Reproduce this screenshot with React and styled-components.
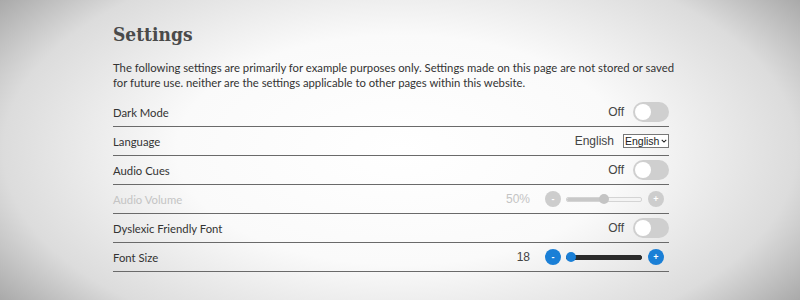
import React, { useState } from 'react'
import styled, { createGlobalStyle } from 'styled-components'

const GlobalStyle = createGlobalStyle`
  html, body {
    margin: 0;
    padding: 0;
  }
  body {
    width: 800px;
    height: 300px;
    overflow: hidden;
    background: radial-gradient(ellipse 62% 85% at 50% 50%, #ffffff 0%, #fafafa 45%, #dcdcdc 80%, #a9a9a9 100%);
  }
`

function Toggle({ on }) {
  return (
    <Switch $on={on}>
      <Knob $on={on} />
    </Switch>
  )
}

function Stepper({ value, disabled }) {
  const pos = `calc(4px + ${value / 100} * (100% - 8px))`
  return (
    <StepGroup>
      <RoundButton $disabled={disabled}>-</RoundButton>
      <Track $disabled={disabled}>
        <Fill $disabled={disabled} style={{ width: pos }} />
        <Thumb $disabled={disabled} style={{ left: pos }} />
      </Track>
      <RoundButton $disabled={disabled}>+</RoundButton>
    </StepGroup>
  )
}

function App() {
  const [lang] = useState('English')

  return (
    <>
      <GlobalStyle />
      <Page>
        <Title>Settings</Title>
        <Intro>
          The following settings are primarily for example purposes only. Settings made on this page are not stored or saved
          <br />
          for future use. neither are the settings applicable to other pages within this website.
        </Intro>
        <List>
          <Row>
            <Label>Dark Mode</Label>
            <Control>
              <Value>Off</Value>
              <Toggle />
            </Control>
          </Row>
          <Row>
            <Label>Language</Label>
            <Control>
              <Value>{lang}</Value>
              <SelectBox>
                <Select defaultValue='English'>
                  <option>English</option>
                </Select>
                <Chevron viewBox='0 0 8 5'>
                  <path d='M1 1 L4 4 L7 1' fill='none' stroke='#222' strokeWidth='1.4' />
                </Chevron>
              </SelectBox>
            </Control>
          </Row>
          <Row>
            <Label>Audio Cues</Label>
            <Control>
              <Value>Off</Value>
              <Toggle />
            </Control>
          </Row>
          <Row>
            <Label $disabled>Audio Volume</Label>
            <Control>
              <Value $disabled $wide>50%</Value>
              <Stepper value={50} disabled />
            </Control>
          </Row>
          <Row>
            <Label>Dyslexic Friendly Font</Label>
            <Control>
              <Value>Off</Value>
              <Toggle />
            </Control>
          </Row>
          <Row>
            <Label>Font Size</Label>
            <Control>
              <Value $wide>18</Value>
              <Stepper value={0} />
            </Control>
          </Row>
        </List>
      </Page>
    </>
  )
}

const Page = styled.div`
  width: 556px;
  margin: 0 auto 0 113px;
  padding-top: 22px;
`
const Title = styled.h1`
  margin: 0 0 14px;
  font-family: 'DejaVu Serif Condensed', 'DejaVu Serif', serif;
  font-stretch: condensed;
  font-size: 19px;
  font-weight: bold;
  color: #4a4a4a;
  line-height: 24px;
`
const Intro = styled.p`
  margin: 0 0 8px;
  font-family: 'Lato', sans-serif;
  font-size: 11.3px;
  line-height: 15px;
  color: #333;
  white-space: nowrap;
`
const List = styled.div`
  display: flex;
  flex-direction: column;
`
const Row = styled.div`
  display: flex;
  align-items: center;
  justify-content: space-between;
  height: 28px;
  border-bottom: 1px solid #6a6a6a;
`
const Label = styled.span`
  font-family: 'Lato', sans-serif;
  font-size: 11.3px;
  color: ${(p) => (p.$disabled ? '#c4c4c4' : '#333')};
`
const Control = styled.div`
  display: flex;
  align-items: center;
  gap: 9px;
`
const Value = styled.span`
  font-family: 'Liberation Sans', sans-serif;
  font-size: 12px;
  color: ${(p) => (p.$disabled ? '#c4c4c4' : '#444')};
  margin-right: ${(p) => (p.$wide ? '6px' : '0')};
`
const Switch = styled.div`
  width: 36px;
  height: 20px;
  border-radius: 10px;
  background: ${(p) => (p.$on ? '#1a7fd6' : '#cfcfcf')};
  position: relative;
`
const Knob = styled.div`
  position: absolute;
  top: 2px;
  left: ${(p) => (p.$on ? '18px' : '2px')};
  width: 16px;
  height: 16px;
  border-radius: 50%;
  background: #fff;
`
const SelectBox = styled.div`
  position: relative;
  display: flex;
`
const Select = styled.select`
  appearance: none;
  -webkit-appearance: none;
  font-family: 'Liberation Sans', sans-serif;
  font-size: 10.5px;
  height: 14px;
  width: 46px;
  padding: 0 8px 0 1px;
  border: 1px solid #777;
  border-radius: 0;
  background: #fff;
  color: #222;
  line-height: 12px;
`
const Chevron = styled.svg`
  position: absolute;
  right: 2px;
  top: 5px;
  width: 6px;
  height: 4px;
  pointer-events: none;
`
const StepGroup = styled.div`
  display: flex;
  align-items: center;
  gap: 5px;
  margin-right: 5px;
`
const RoundButton = styled.div`
  width: 16px;
  height: 16px;
  border-radius: 50%;
  background: ${(p) => (p.$disabled ? '#cdcdcd' : '#1a7fd6')};
  color: #fff;
  font-family: 'Liberation Sans', sans-serif;
  font-size: 9px;
  font-weight: bold;
  line-height: 16px;
  text-align: center;
`
const Track = styled.div`
  position: relative;
  width: 74px;
  height: 3px;
  border-radius: 2px;
  margin: 0 1px 0 0;
  background: ${(p) => (p.$disabled ? '#f4f4f4' : '#2b2b2b')};
  border: ${(p) => (p.$disabled ? '1px solid #d4d4d4' : '1px solid #2b2b2b')};
`
const Fill = styled.div`
  height: 100%;
  border-radius: 2px;
  background: ${(p) => (p.$disabled ? '#c8c8c8' : '#2b2b2b')};
`
const Thumb = styled.div`
  position: absolute;
  top: 50%;
  width: 10px;
  height: 10px;
  border-radius: 50%;
  transform: translate(-50%, -50%);
  background: ${(p) => (p.$disabled ? '#c4c4c4' : '#1a7fd6')};
`

export default App
